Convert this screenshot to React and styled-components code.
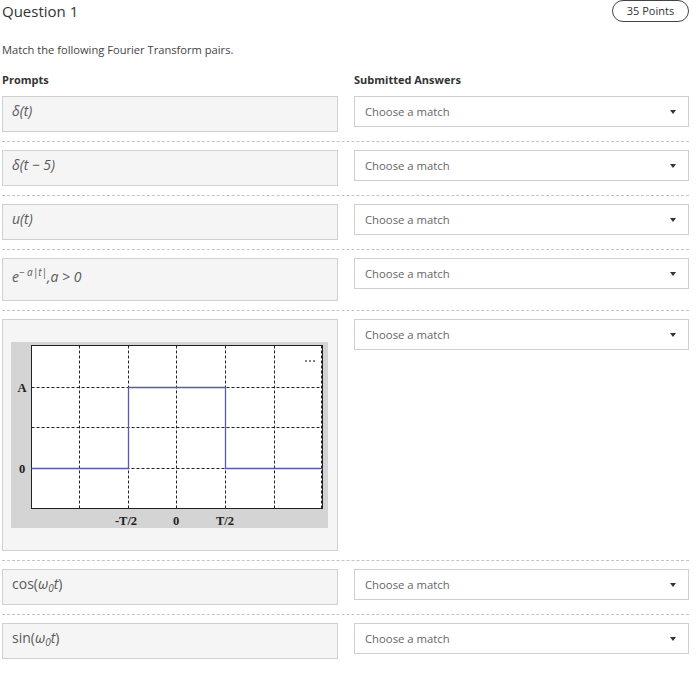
import React from "react";
import styled, { createGlobalStyle } from "styled-components";

const Global = createGlobalStyle`
  html, body { margin: 0; padding: 0; background: #fff; }
  body { font-family: "Open Sans", "Liberation Sans", sans-serif; color: #333; }
`;

const Page = styled.div`
  width: 687px;
  padding: 0 8px 0 2px;
`;

const Header = styled.div`
  display: flex;
  justify-content: space-between;
  align-items: center;
  height: 22px;
`;

const Title = styled.h1`
  margin: 0;
  font-size: 15px;
  font-weight: 400;
  color: #333;
  line-height: 22px;
`;

const Pill = styled.div`
  box-sizing: border-box;
  height: 22px;
  width: 77px;
  border: 1px solid #444;
  border-radius: 11px;
  font-size: 11px;
  line-height: 20px;
  text-align: center;
  color: #333;
`;

const Instruction = styled.p`
  margin: 20px 0 0;
  font-size: 11.15px;
  line-height: 16px;
  color: #444;
`;

const Grid = styled.div`
  display: grid;
  grid-template-columns: 336px 335px;
  column-gap: 16px;
`;

const ColHead = styled.div`
  margin-top: 14px;
  margin-bottom: 8px;
  font-size: 11px;
  font-weight: 700;
  line-height: 16px;
  color: #333;
`;

const Row = styled.div`
  display: grid;
  grid-template-columns: 336px 335px;
  column-gap: 16px;
  align-items: start;
  padding: ${(p) => (p.first ? "0 0 9px" : "8px 0 9px")};
  border-top: ${(p) => (p.first ? "none" : "1px dashed #c4c4c4")};
`;

const PromptBox = styled.div`
  box-sizing: border-box;
  min-height: ${(p) => p.h || 36}px;
  padding: ${(p) => (p.pad ? p.pad : "4px 9px")};
  background: #f5f5f5;
  border: 1px solid #cfcfcf;
  font-size: 14px;
  line-height: 20px;
  color: #5a5a5a;
`;

const M = styled.span`
  font-style: italic;
  font-family: "Open Sans", "DejaVu Sans", sans-serif;
`;

const Up = styled.span`
  font-style: normal;
`;

const Sup = styled.sup`
  font-size: 10px;
  vertical-align: 6px;
  line-height: 0;
`;

const Sub = styled.sub`
  font-size: 10px;
  vertical-align: -3px;
  line-height: 0;
`;

const Select = styled.div`
  box-sizing: border-box;
  height: 31px;
  display: flex;
  align-items: center;
  justify-content: space-between;
  padding: 0 12px 0 10px;
  border: 1px solid #cfcfcf;
  background: #fff;
  font-size: 11.3px;
  color: #666;
`;

const Caret = styled.span`
  width: 0;
  height: 0;
  border-left: 3.5px solid transparent;
  border-right: 3.5px solid transparent;
  border-top: 4px solid #333;
  margin-top: 1px;
`;

const Chart = styled.svg`
  display: block;
`;

function Choose() {
  return (
    <Select>
      <span>Choose a match</span>
      <Caret />
    </Select>
  );
}

function RectChart() {
  const vx = [68.5, 117.5, 165.5, 214.5, 263.5];
  const hy = [45.5, 85.5, 126.5];
  return (
    <Chart width="317" height="186" viewBox="0 0 317 186">
      <rect x="0" y="0" width="317" height="186" fill="#d4d4d4" />
      <rect x="20.5" y="3.5" width="291" height="163" fill="#fff" stroke="#222" strokeWidth="1" />
      {vx.map((x) => (
        <line key={x} x1={x} y1="3.5" x2={x} y2="166.5" stroke="#222" strokeWidth="1" strokeDasharray="3 2" />
      ))}
      {hy.map((y) => (
        <line key={y} x1="20.5" y1={y} x2="311.5" y2={y} stroke="#222" strokeWidth="1" strokeDasharray="3 2" />
      ))}
      <line x1="310.5" y1="3.5" x2="310.5" y2="166.5" stroke="#222" strokeWidth="1" strokeDasharray="3 2" />
      <polyline
        points="20.5,126.5 117.5,126.5 117.5,45.5 214.5,45.5 214.5,126.5 311.5,126.5"
        fill="none"
        stroke="#5a5aa8"
        strokeWidth="1.3"
      />
      <g fill="#666">
        <circle cx="295" cy="19" r="1.1" />
        <circle cx="299" cy="19" r="1.1" />
        <circle cx="303" cy="19" r="1.1" />
      </g>
      <g fontFamily='"Liberation Serif", "Times New Roman", serif' fontWeight="700" fontSize="12.5" fill="#222" textAnchor="middle">
        <text x="11" y="50">A</text>
        <text x="11" y="131">0</text>
        <text x="115" y="183">-T/2</text>
        <text x="165" y="183">0</text>
        <text x="214" y="183">T/2</text>
      </g>
    </Chart>
  );
}

export default function App() {
  return (
    <>
      <Global />
      <Page>
        <Header>
          <Title>Question 1</Title>
          <Pill>35 Points</Pill>
        </Header>
        <Instruction>Match the following Fourier Transform pairs.</Instruction>
        <Grid>
          <ColHead>Prompts</ColHead>
          <ColHead>Submitted Answers</ColHead>
        </Grid>
        <Row first>
          <PromptBox>
            <M>δ(t)</M>
          </PromptBox>
          <Choose />
        </Row>
        <Row>
          <PromptBox>
            <M>δ(t − 5)</M>
          </PromptBox>
          <Choose />
        </Row>
        <Row>
          <PromptBox>
            <M>u(t)</M>
          </PromptBox>
          <Choose />
        </Row>
        <Row>
          <PromptBox h={43} pad="8px 9px 4px">
            <M>
              e<Sup>− a|t|</Sup>,a &gt; 0
            </M>
          </PromptBox>
          <Choose />
        </Row>
        <Row>
          <PromptBox pad="22px 8px">
            <RectChart />
          </PromptBox>
          <Choose />
        </Row>
        <Row>
          <PromptBox>
            <Up>cos(</Up>
            <M>
              ω<Sub>0</Sub>t
            </M>
            <Up>)</Up>
          </PromptBox>
          <Choose />
        </Row>
        <Row>
          <PromptBox>
            <Up>sin(</Up>
            <M>
              ω<Sub>0</Sub>t
            </M>
            <Up>)</Up>
          </PromptBox>
          <Choose />
        </Row>
      </Page>
    </>
  );
}
